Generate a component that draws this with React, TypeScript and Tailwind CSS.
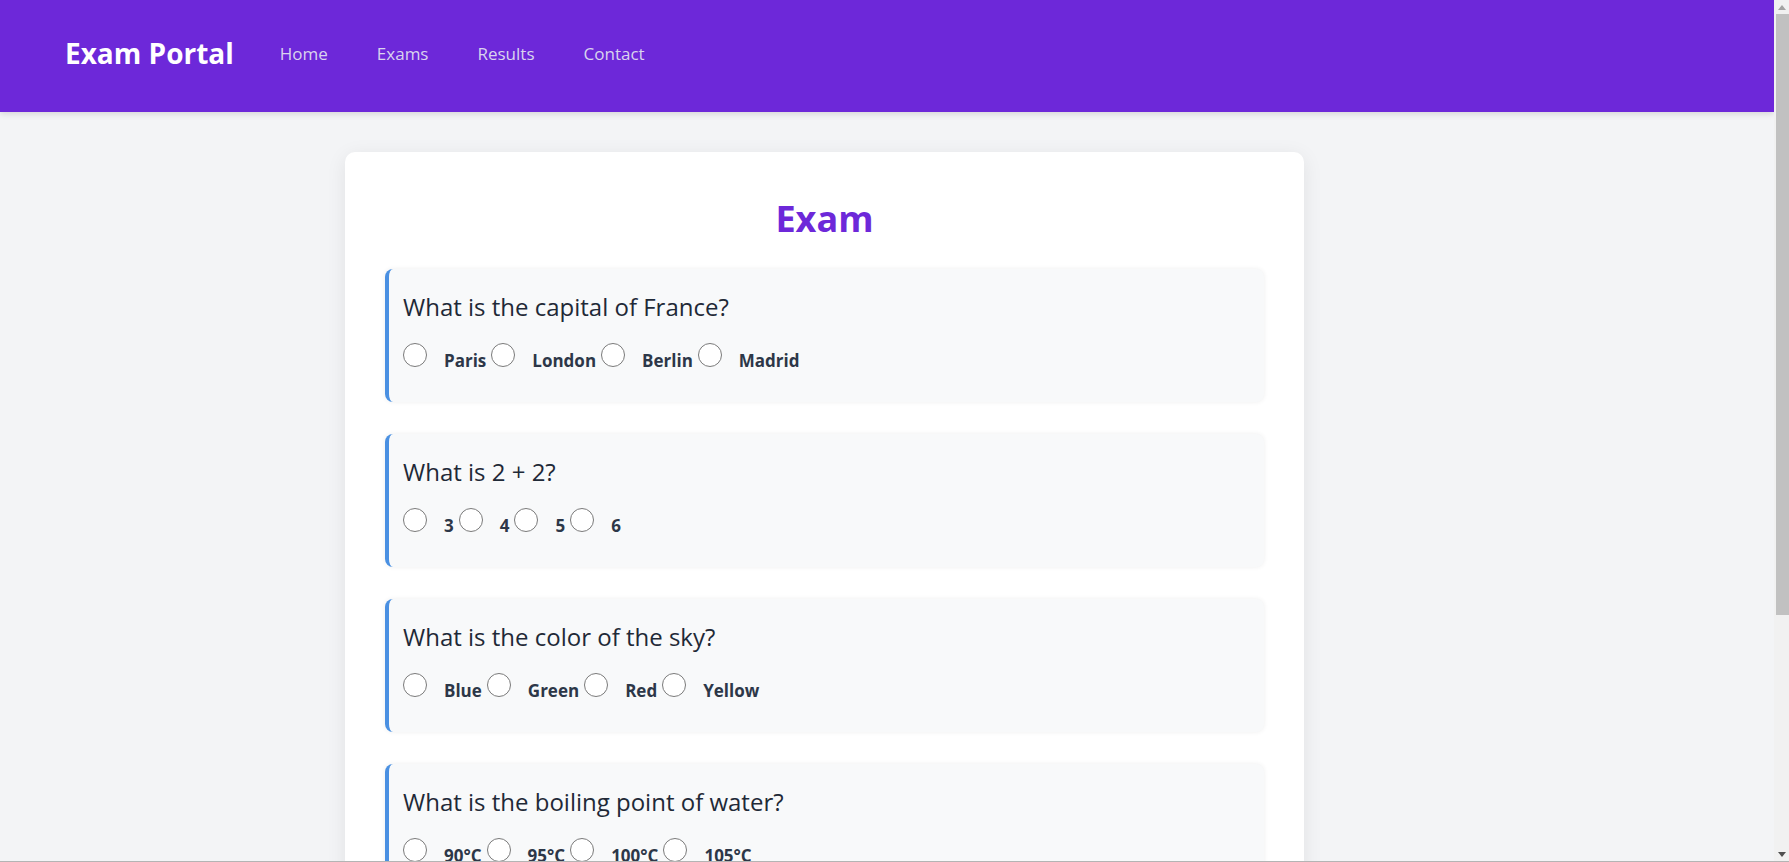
import { useState } from 'react';

interface Question {
  id: number;
  text: string;
  options: string[];
}

const questions: Question[] = [
  { id: 1, text: 'What is the capital of France?', options: ['Paris', 'London', 'Berlin', 'Madrid'] },
  { id: 2, text: 'What is 2 + 2?', options: ['3', '4', '5', '6'] },
  { id: 3, text: 'What is the color of the sky?', options: ['Blue', 'Green', 'Red', 'Yellow'] },
  { id: 4, text: 'What is the boiling point of water?', options: ['90°C', '95°C', '100°C', '105°C'] },
  { id: 5, text: 'How many continents are there?', options: ['5', '6', '7', '8'] },
];

// ─── Header ───────────────────────────────────────────────────────────────────

function Header() {
  const links = ['Home', 'Exams', 'Results', 'Contact'];
  return (
    <header className="relative z-10 h-[112px] bg-[#6d28d9] flex items-center pl-[65px] pb-[6px] shadow-[0_2px_6px_rgba(0,0,0,0.12)]">
      <div className="text-[28px] font-bold text-white leading-none">Exam Portal</div>
      <nav className="flex items-center gap-[49px] ml-[46px]">
        {links.map(l => (
          <a key={l} href="#" className="text-[17px] font-medium text-[#d9d3ee] leading-none">
            {l}
          </a>
        ))}
      </nav>
    </header>
  );
}

// ─── Question card ────────────────────────────────────────────────────────────

function QuestionCard({ q, value, onChange }: { q: Question; value: string | null; onChange: (v: string) => void }) {
  return (
    <div className="mb-[32px] bg-[#f8f9fa] border-l-4 border-[#4a90e2] rounded-[8px] pl-[14px] pr-[15px] pt-[22px] pb-[30px] shadow-[0_0_5px_rgba(0,0,0,0.07)]">
      <h3 className="text-[24px] leading-[32px] text-[#1f2937] mb-[20px]">{q.text}</h3>
      <div className="flex items-baseline">
        {q.options.map(opt => {
          const id = `q${q.id}-${opt}`;
          return (
            <div key={opt} className="flex items-baseline">
              <input
                id={id}
                type="radio"
                name={`q${q.id}`}
                checked={value === opt}
                onChange={() => onChange(opt)}
                className="appearance-none w-[24px] h-[24px] m-0 rounded-full border border-[#7a7a7a] bg-white checked:border-[7px] checked:border-[#4a90e2]"
              />
              <label htmlFor={id} className="ml-[17px] mr-[5px] text-[17px] leading-[22px] font-bold text-[#2d3748]">
                {opt}
              </label>
            </div>
          );
        })}
      </div>
    </div>
  );
}

// ─── Window scrollbar (headless hides the native one) ─────────────────────────

function ScrollStrip() {
  return (
    <div className="w-[15px] flex-none bg-[#f1f1f1] flex flex-col">
      <div className="h-[14px] flex items-center justify-center">
        <svg width="8" height="5" viewBox="0 0 8 5"><path d="M4 0 L8 5 L0 5 Z" fill="#a3a3a3" /></svg>
      </div>
      <div className="flex-1 pl-[2px]">
        <div className="h-[601px] bg-[#c1c1c1]" />
      </div>
      <div className="h-[14px] flex items-center justify-center">
        <svg width="8" height="5" viewBox="0 0 8 5"><path d="M0 0 L8 0 L4 5 Z" fill="#505050" /></svg>
      </div>
    </div>
  );
}

export default function App() {
  const [answers, setAnswers] = useState<Record<number, string>>({});

  return (
    <div className="h-screen flex overflow-hidden border-b border-[#b4b4b4] font-['Open_Sans',sans-serif]">
      <div className="flex-1 min-w-0 overflow-hidden bg-[#f3f4f6]">
        <Header />
        <main className="mt-[40px] mb-[40px] ml-[345px] w-[959px] bg-white rounded-[10px] px-[40px] pt-[43px] pb-[40px] shadow-[0_4px_20px_rgba(0,0,0,0.08)]">
          <h1 className="text-center text-[36px] leading-[48px] font-bold text-[#6d28d9] mb-[26px]">Exam</h1>
          {questions.map(q => (
            <QuestionCard
              key={q.id}
              q={q}
              value={answers[q.id] ?? null}
              onChange={v => setAnswers(a => ({ ...a, [q.id]: v }))}
            />
          ))}
          <button className="block mx-auto px-[30px] py-[10px] rounded-[6px] bg-[#6d28d9] text-white text-[16px] font-bold">
            Submit Exam
          </button>
        </main>
      </div>
      <ScrollStrip />
    </div>
  );
}
